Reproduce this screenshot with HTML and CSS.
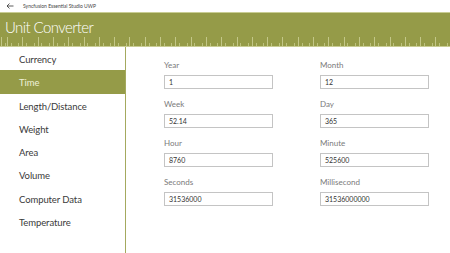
FILE: index.html
```html
<!DOCTYPE html>
<html>
<head>
	<title>Unit Converter</title>
	<link rel="stylesheet" href="styles.css">
</head>
<body>
	<div class="titlebar">
		<svg class="back" width="8" height="6" viewBox="0 0 8 6"><path d="M7.5 3H1M3.5 0.5L1 3l2.5 2.5" fill="none" stroke="#333" stroke-width="0.8"/></svg>
		<span>Syncfusion Essential Studio UWP</span>
	</div>
	<div class="header">
		<div class="title">Unit Converter</div>
		<div class="ruler"></div>
	</div>
	<div class="main">
		<ul class="nav">
			<li>Currency</li>
			<li class="selected">Time</li>
			<li>Length/Distance</li>
			<li>Weight</li>
			<li>Area</li>
			<li>Volume</li>
			<li>Computer Data</li>
			<li>Temperature</li>
		</ul>
		<div class="fields">
			<div class="field"><label>Year</label><div class="box">1</div></div>
			<div class="field"><label>Month</label><div class="box">12</div></div>
			<div class="field"><label>Week</label><div class="box">52.14</div></div>
			<div class="field"><label>Day</label><div class="box">365</div></div>
			<div class="field"><label>Hour</label><div class="box">8760</div></div>
			<div class="field"><label>Minute</label><div class="box">525600</div></div>
			<div class="field"><label>Seconds</label><div class="box">31536000</div></div>
			<div class="field"><label>Millisecond</label><div class="box">31536000000</div></div>
		</div>
	</div>
</body>
</html>
```
FILE: styles.css
```css
html, body { margin: 0; padding: 0; height: 100%; }
body {
	font-family: Lato, "Open Sans", sans-serif;
	background-color: #ffffff;
	color: #333333;
	display: flex;
	flex-direction: column;
}

.titlebar {
	height: 12px;
	display: flex;
	align-items: center;
	font-size: 5px;
	color: #444444;
}
.titlebar .back { margin: 0 9px 0 6px; }

.header {
	height: 34px;
	background-color: #959b48;
	border-top: 1px solid #c9cd94;
	display: flex;
	flex-direction: column;
	justify-content: space-between;
}
.header .title {
	color: #ffffff;
	font-size: 15px;
	font-weight: 300;
	line-height: 20px;
	letter-spacing: -0.6px;
	padding: 4px 0 0 5px;
}
.ruler {
	height: 10px;
	background-image:
		repeating-linear-gradient(90deg, #c3c788 0, #c3c788 1px, transparent 1px, transparent 15.3px),
		repeating-linear-gradient(90deg, transparent 0, transparent 3.8px, #bdc27f 3.8px, #bdc27f 4.8px, transparent 4.8px, transparent 7.65px);
	background-size: 100% 10px, 100% 4px;
	background-position: 7px 0, 7px 6px;
	background-repeat: repeat-x;
	border-bottom: 1px solid #c9cd94;
}

.main { flex: 1; display: flex; }

.nav {
	list-style: none;
	margin: 0;
	padding: 0;
	width: 125px;
	border-right: 1px solid #a4a95e;
}
.nav li {
	height: 23.3px;
	line-height: 25px;
	padding-left: 19px;
	font-size: 9.5px;
	letter-spacing: -0.1px;
	color: #3a3a3a;
}
.nav li.selected { background-color: #959b48; color: #eef0d8; }

.fields {
	display: grid;
	grid-template-columns: 109px 109px;
	column-gap: 47px;
	row-gap: 9px;
	align-content: start;
	padding: 12px 0 0 38px;
}
.field label {
	display: block;
	font-size: 8px;
	line-height: 12px;
	color: #7a7a7a;
	margin-bottom: 4px;
}
.box {
	height: 12px;
	border: 1px solid #c4c4c4;
	font-size: 7px;
	line-height: 12px;
	padding-left: 4px;
	color: #333333;
}
```
